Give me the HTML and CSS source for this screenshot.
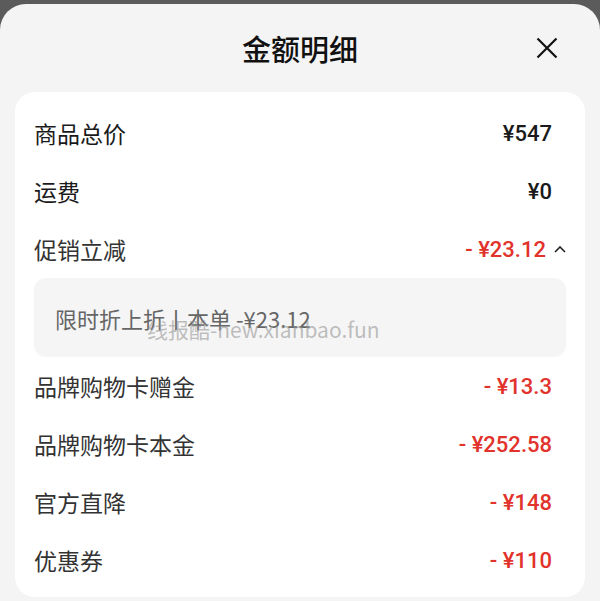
FILE: index.html
```html
<!DOCTYPE html>
<html lang="zh-CN">
<head>
  <meta charset="UTF-8">
  <meta name="viewport" content="width=device-width, initial-scale=1.0">
  <title>金额明细</title>
  <link rel="stylesheet" href="styles.css">
</head>
<body>
  <div class="sheet">
    <div class="header">
      <span></span>
      <h1>金额明细</h1>
      <button class="close" aria-label="关闭">
        <svg width="22" height="22" viewBox="0 0 22 22">
          <path d="M1.5 1.5 L20.5 20.5 M20.5 1.5 L1.5 20.5" stroke="#111" stroke-width="2.2" fill="none"/>
        </svg>
      </button>
    </div>

    <div class="card">
      <div class="row">
        <span class="label dark">商品总价</span>
        <span class="value">¥547</span>
      </div>
      <div class="row">
        <span class="label dark">运费</span>
        <span class="value">¥0</span>
      </div>
      <div class="row row-open">
        <span class="label">促销立减</span>
        <span class="value red">- ¥23.12</span>
        <svg class="chevron" width="12" height="7" viewBox="0 0 12 7">
          <path d="M1 6 L6 1 L11 6" stroke="#222" stroke-width="1.6" fill="none"/>
        </svg>
      </div>
      <div class="detail">
        <span>限时折上折丨本单 -¥23.12</span>
        <span class="watermark">线报酷-new.xianbao.fun</span>
      </div>
      <div class="row">
        <span class="label">品牌购物卡赠金</span>
        <span class="value red">- ¥13.3</span>
      </div>
      <div class="row">
        <span class="label">品牌购物卡本金</span>
        <span class="value red">- ¥252.58</span>
      </div>
      <div class="row">
        <span class="label">官方直降</span>
        <span class="value red">- ¥148</span>
      </div>
      <div class="row">
        <span class="label">优惠券</span>
        <span class="value red">- ¥110</span>
      </div>
    </div>
  </div>
</body>
</html>
```

FILE: styles.css
```css
body {
  margin: 0;
  height: 601px;
  overflow: hidden;
  background-color: #5b5b5b;
  font-family: "Noto Sans CJK SC", "Noto Sans", sans-serif;
}
.sheet {
  margin-top: 4px;
  height: 597px;
  background-color: #f4f4f4;
  border-radius: 26px 26px 0 0;
  padding: 0 15px;
}
.header {
  height: 88px;
  display: grid;
  grid-template-columns: 1fr auto 1fr;
  align-items: center;
}
.header h1 {
  margin: 0;
  font-size: 29px;
  font-weight: 500;
  color: #111;
}
.close {
  justify-self: end;
  margin-right: 27px;
  padding: 0;
  border: none;
  background: none;
  width: 22px;
  height: 22px;
  cursor: pointer;
}
.card {
  background-color: white;
  border-radius: 20px;
  padding: 12px 19px 8px;
}
.row {
  height: 58px;
  display: flex;
  align-items: center;
  padding-right: 14px;
}
.row-open { padding-right: 0; }
.label {
  flex: 1;
  font-size: 23px;
  color: #333;
}
.label.dark { color: #1a1a1a; }
.value {
  font-family: Roboto, "Liberation Sans", sans-serif;
  font-size: 22px;
  font-weight: 500;
  color: #1a1a1a;
}
.value.red { color: #e2322c; }
.chevron { margin-left: 8px; }
.detail {
  position: relative;
  height: 79px;
  display: flex;
  align-items: center;
  padding-left: 21px;
  border-radius: 12px;
  background-color: #f5f5f5;
  font-size: 22px;
  color: #666;
}
.watermark {
  position: absolute;
  left: 113px;
  top: 36px;
  font-size: 21px;
  color: rgba(150, 150, 150, 0.6);
}
```
